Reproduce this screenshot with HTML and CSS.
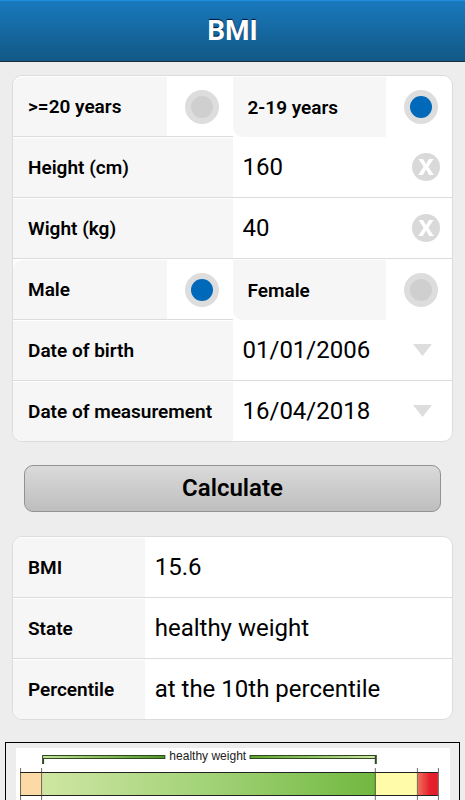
FILE: index.html
```html
<!DOCTYPE html>
<html lang="en">
<head>
    <meta charset="UTF-8">
    <meta name="viewport" content="width=device-width, initial-scale=1.0">
    <title>BMI</title>
    <link rel="stylesheet" href="styles.css">
</head>
<body>

<header class="header">
    <h1>BMI</h1>
</header>

<form id="bmi-form" onsubmit="calculate(event)">
    <div class="card">
        <div class="row split">
            <div class="half first">
                <label class="name" for="adult">&gt;=20 years</label>
                <span class="pick"><input type="radio" name="age" id="adult"></span>
            </div>
            <div class="half second">
                <label class="name" for="child">2-19 years</label>
                <span class="pick"><input type="radio" name="age" id="child" checked></span>
            </div>
        </div>
        <div class="row">
            <label class="name" for="height">Height (cm)</label>
            <div class="value">
                <input type="text" id="height" inputmode="decimal" value="160">
                <button type="button" class="clear" aria-label="Clear height" onclick="clearField('height')">
                    <svg viewBox="0 0 28 28"><path d="M6.500 6H11L14 11.300L17 6H21.500L16.400 13.700L21.700 22H17.200L14 16.500L10.800 22H6.300L11.600 13.700Z"/></svg>
                </button>
            </div>
        </div>
        <div class="row">
            <label class="name" for="weight">Wight (kg)</label>
            <div class="value">
                <input type="text" id="weight" inputmode="decimal" value="40">
                <button type="button" class="clear" aria-label="Clear weight" onclick="clearField('weight')">
                    <svg viewBox="0 0 28 28"><path d="M6.500 6H11L14 11.300L17 6H21.500L16.400 13.700L21.700 22H17.200L14 16.500L10.800 22H6.300L11.600 13.700Z"/></svg>
                </button>
            </div>
        </div>
        <div class="row split">
            <div class="half first">
                <label class="name" for="male">Male</label>
                <span class="pick"><input type="radio" name="sex" id="male" checked></span>
            </div>
            <div class="half second">
                <label class="name" for="female">Female</label>
                <span class="pick"><input type="radio" name="sex" id="female"></span>
            </div>
        </div>
        <div class="row">
            <label class="name" for="birth">Date of birth</label>
            <div class="value">
                <select id="birth"><option>01/01/2006</option></select>
                <svg class="arrow" viewBox="0 0 19 12"><path d="M0 0H19L9.5 12Z"/></svg>
            </div>
        </div>
        <div class="row">
            <label class="name" for="measured">Date of measurement</label>
            <div class="value">
                <select id="measured"><option>16/04/2018</option></select>
                <svg class="arrow" viewBox="0 0 19 12"><path d="M0 0H19L9.5 12Z"/></svg>
            </div>
        </div>
    </div>

    <button type="submit" class="calculate">Calculate</button>
</form>

<!-- Results -->
<dl class="card results">
    <div class="row"><dt class="name">BMI</dt><dd class="value" id="bmi">15.6</dd></div>
    <div class="row"><dt class="name">State</dt><dd class="value">healthy weight</dd></div>
    <div class="row"><dt class="name">Percentile</dt><dd class="value">at the 10th percentile</dd></div>
</dl>

<!-- Percentile scale -->
<figure class="chart">
    <svg viewBox="0 0 433 52" role="img" aria-label="Weight percentile scale">
        <defs>
            <linearGradient id="green"><stop offset="0" stop-color="#cfe6a3"/><stop offset="0.5" stop-color="#a2d277"/><stop offset="1" stop-color="#71b840"/></linearGradient>
            <linearGradient id="lineLeft"><stop offset="0" stop-color="#c5e198"/><stop offset="1" stop-color="#4f9826"/></linearGradient>
            <linearGradient id="lineRight"><stop offset="0" stop-color="#5ca62e"/><stop offset="1" stop-color="#cfe6a3"/></linearGradient>
            <linearGradient id="red"><stop offset="0" stop-color="#f0705a"/><stop offset="0.6" stop-color="#e61f2c"/><stop offset="1" stop-color="#e01e28"/></linearGradient>
        </defs>
        <rect width="433" height="52" fill="#fff"/>
        <rect x="4" y="24" width="22" height="23" fill="#fdd9a6"/>
        <rect x="26" y="24" width="333" height="23" fill="url(#green)"/>
        <rect x="359" y="24" width="42" height="23" fill="#fffba9"/>
        <rect x="401" y="24" width="20" height="23" fill="url(#red)"/>
        <path d="M4 24.500H421M4 47.500H421" stroke="#222" fill="none"/>
        <path d="M4.500 20V52M25.500 20V52M358.500 20V52M400.500 20V52M421.500 20V52" stroke="#333" stroke-opacity="0.7" fill="none"/>
        <path d="M26 7H149V11H28V16H26Z" fill="#2f4a20"/>
        <rect x="27" y="8" width="121" height="2" fill="url(#lineLeft)"/>
        <path d="M233 7H360V16H358V11H233Z" fill="#2f4a20"/>
        <rect x="234" y="8" width="124" height="2" fill="url(#lineRight)"/>
        <text x="153" y="12">healthy weight</text>
    </svg>
</figure>

<script>
    function clearField(id) {
        const field = document.getElementById(id);
        field.value = "";
        field.focus();
    }

    // BMI = kg / m^2
    function calculate(event) {
        event.preventDefault();
        const meters = document.getElementById("height").value / 100;
        const weight = document.getElementById("weight").value;
        if (meters > 0 && weight > 0) {
            document.getElementById("bmi").textContent = (weight / (meters * meters)).toFixed(1);
        }
    }
</script>

</body>
</html>
```

FILE: styles.css
```css
* { box-sizing: border-box; }
body { margin: 0; background: #ededed; color: #000; font-family: Roboto, sans-serif; }

.header { height: 62px; display: flex; align-items: center; justify-content: center; background: linear-gradient(#1979bd, #125885); border-top: 1px solid #1f8de0; border-bottom: 1px solid #1c2c40; }
.header h1 { margin: 0; color: #fff; font-size: 28px; line-height: 32px; font-weight: 700; text-shadow: 0 -1px 1px #001040; }

.card { margin: 13px 12px 0; background: #fff; border: 1px solid #dcdcdc; border-radius: 10px; overflow: hidden; }
.row { display: grid; grid-template-columns: 1fr 1fr; height: 61px; border-bottom: 1px solid #dcdcdc; }
.row:last-child { height: 60px; border-bottom: 0; }
.name { display: flex; align-items: center; padding: 0 0 0 15px; background: #f6f6f6; border-top: 1px solid #fff; font-size: 19px; font-weight: 600; white-space: nowrap; }
.value { display: flex; align-items: center; min-width: 0; margin: 0; padding: 0 12px 0 10px; font-size: 24px; }

/* Two radio options side by side */
.split { border-bottom: 0; }
.half { display: grid; grid-template-columns: 7fr 3fr; }
.first { border-bottom: 1px solid #dcdcdc; }
.first .name { border-top-left-radius: 10px; }
.second .name { border-bottom-left-radius: 10px; }
.pick { display: flex; align-items: center; justify-content: center; padding: 1px 0 0 4px; }
.pick input { appearance: none; width: 34px; height: 34px; margin: 0; border: 6px solid #dddddd; border-radius: 50%; background: #cfcfcf; }
.pick input:checked { background: #0069b9; }

.value input, .value select { flex: 1; min-width: 0; padding: 0; border: 0; background: none; color: #000; font: inherit; appearance: none; }
.clear { width: 28px; height: 28px; padding: 0; border: 0; border-radius: 50%; background: #d9d9d9; }
.clear svg { display: block; fill: #fff; }
.arrow { width: 19px; height: 12px; margin-right: 8px; fill: #dddddd; }

.calculate { display: block; width: calc(100% - 48px); height: 47px; margin: 23px auto 0; padding: 0 0 2px; border: 1px solid #929292; border-radius: 9px; background: linear-gradient(#dadada, #bebebe); color: #000; font-family: inherit; font-size: 24px; font-weight: 600; }

.results { margin-top: 24px; }
.results .row { grid-template-columns: 3fr 7fr; }

.chart { margin: 22px 5px 0; padding: 5px 9px 0 10px; border: 1px solid #000; border-bottom: 0; }
.chart svg { display: block; width: 100%; }
.chart text { font-family: "Liberation Sans", sans-serif; font-size: 12px; fill: #222; }
```
